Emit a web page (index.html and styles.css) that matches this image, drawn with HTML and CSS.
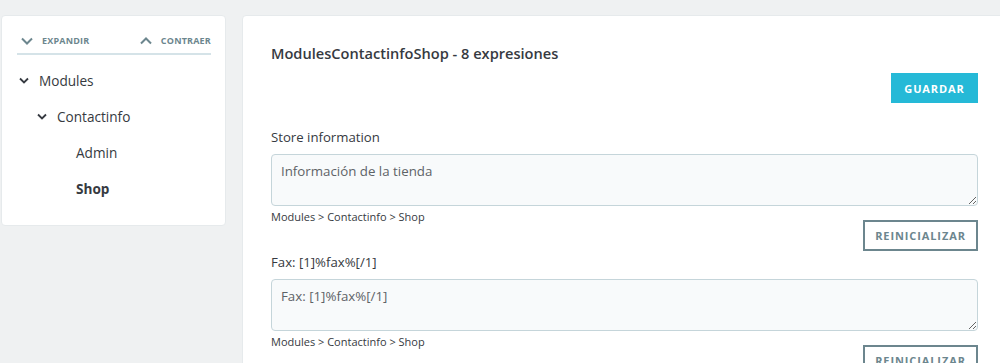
FILE: index.html
```html
<!DOCTYPE html>
<html lang="es">
<head>
<meta charset="utf-8">
<title>Traducciones</title>
<link rel="stylesheet" href="styles.css">
</head>
<body>
<div class="page">
  <aside class="tree-card">
    <div class="tree-actions">
      <button class="tree-btn" type="button">
        <svg class="chev" viewBox="0 0 12 8" width="12" height="8"><path d="M1 1.5 L6 6.5 L11 1.5" fill="none" stroke="currentColor" stroke-width="2"/></svg>
        <span>Expandir</span>
      </button>
      <button class="tree-btn" type="button">
        <svg class="chev" viewBox="0 0 12 8" width="12" height="8"><path d="M1 6.5 L6 1.5 L11 6.5" fill="none" stroke="currentColor" stroke-width="2"/></svg>
        <span>Contraer</span>
      </button>
    </div>
    <ul class="tree">
      <li class="node lvl1">
        <svg class="tchev" viewBox="0 0 10 7" width="10" height="7"><path d="M1 1.5 L5 5.5 L9 1.5" fill="none" stroke="currentColor" stroke-width="1.8"/></svg>
        <span>Modules</span>
      </li>
      <li class="node lvl2">
        <svg class="tchev" viewBox="0 0 10 7" width="10" height="7"><path d="M1 1.5 L5 5.5 L9 1.5" fill="none" stroke="currentColor" stroke-width="1.8"/></svg>
        <span>Contactinfo</span>
      </li>
      <li class="node lvl3"><span>Admin</span></li>
      <li class="node lvl3 active"><span>Shop</span></li>
    </ul>
  </aside>

  <main class="main-card">
    <h2 class="title">ModulesContactinfoShop - 8 expresiones</h2>
    <div class="save-row">
      <button class="btn-primary" type="button">Guardar</button>
    </div>

    <div class="expr">
      <label class="expr-label">Store information</label>
      <textarea class="expr-input">Información de la tienda</textarea>
      <div class="crumb">Modules &gt; Contactinfo &gt; Shop</div>
      <div class="reset-row"><button class="btn-outline" type="button">Reinicializar</button></div>
    </div>

    <div class="expr">
      <label class="expr-label">Fax: [1]%fax%[/1]</label>
      <textarea class="expr-input">Fax: [1]%fax%[/1]</textarea>
      <div class="crumb">Modules &gt; Contactinfo &gt; Shop</div>
      <div class="reset-row"><button class="btn-outline" type="button">Reinicializar</button></div>
    </div>
  </main>
</div>
</body>
</html>
```

FILE: styles.css
```css
* { box-sizing: border-box; }

html, body {
  margin: 0;
  padding: 0;
  background: #eff1f2;
  overflow: hidden;
  font-family: "Open Sans", "Noto Sans", sans-serif;
  color: #363a41;
}

.page {
  display: flex;
  align-items: flex-start;
  gap: 16px;
  padding: 15px 0 0 1px;
  margin-right: -10px;
}

.tree-card {
  flex: 0 0 225px;
  height: 211px;
  background: #fff;
  border: 1px solid #e6eaec;
  border-radius: 4px;
  padding: 19px 14px 0 15px;
}

.tree-actions {
  display: flex;
  justify-content: space-between;
  align-items: center;
  border-bottom: 2px solid #d5e3e8;
  padding: 0 0 6px 4px;
  height: 12px;
  box-sizing: content-box;
}

.tree-btn {
  display: flex;
  align-items: center;
  gap: 9px;
  background: none;
  border: 0;
  padding: 0;
  font-family: inherit;
  font-size: 9px;
  line-height: 12px;
  font-weight: 700;
  text-transform: uppercase;
  color: #6c868e;
  letter-spacing: 0.2px;
  cursor: pointer;
}

.chev { display: block; color: #6c868e; }

.tree {
  list-style: none;
  margin: 0;
  padding: 7px 0 0 0;
}

.node {
  display: flex;
  align-items: center;
  height: 36px;
  font-size: 13.6px;
  color: #363a41;
}

.tchev { display: block; color: #363a41; margin-right: 10px; }

.lvl1 { padding-left: 2px; }
.lvl2 { padding-left: 20px; }
.lvl3 { padding-left: 59px; }
.active { font-weight: 700; }

.main-card {
  flex: 1;
  background: #fff;
  border: 1px solid #e6eaec;
  border-radius: 4px;
  padding: 27px 31px 0 28px;
  height: 400px;
}

.title {
  margin: 0;
  font-size: 14.6px;
  font-weight: 600;
  line-height: 20px;
  color: #363a41;
}

.save-row {
  display: flex;
  justify-content: flex-end;
  margin-top: 10px;
}

.btn-primary {
  width: 87px;
  height: 30px;
  background: #25b9d7;
  border: 0;
  color: #fff;
  font-family: inherit;
  font-size: 11px;
  font-weight: 700;
  text-transform: uppercase;
  letter-spacing: 0.9px;
  cursor: pointer;
}

.expr {
  display: flex;
  flex-direction: column;
}

.save-row + .expr { margin-top: 24px; }
.expr + .expr { margin-top: 1px; }

.expr-label {
  font-size: 13.2px;
  line-height: 20px;
  color: #363a41;
}

.expr-input {
  margin-top: 7px;
  width: 100%;
  height: 52px;
  resize: vertical;
  background: #f8fafb;
  border: 1px solid #c5d5da;
  border-radius: 4px;
  padding: 6px 9px;
  font-family: inherit;
  font-size: 13.3px;
  line-height: 20px;
  color: #5e6367;
}

.crumb {
  margin-top: 3px;
  font-size: 11px;
  line-height: 15px;
  color: #363a41;
}

.reset-row {
  display: flex;
  justify-content: flex-end;
  margin-top: -4px;
}

.btn-outline {
  width: 115px;
  height: 31px;
  background: #fff;
  border: 2px solid #6c868e;
  color: #6c868e;
  font-family: inherit;
  font-size: 11px;
  font-weight: 700;
  text-transform: uppercase;
  letter-spacing: 0.9px;
  cursor: pointer;
}
```
